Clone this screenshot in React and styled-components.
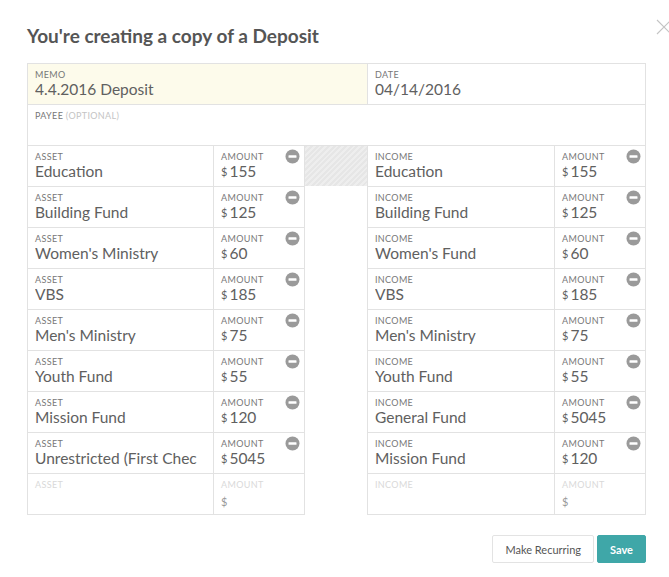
import React from "react";
import styled, { createGlobalStyle } from "styled-components";

const GlobalStyle = createGlobalStyle`
  html, body { margin: 0; padding: 0; background: #fff; }
  body { font-family: Lato, "Open Sans", "Liberation Sans", sans-serif; color: #555; }
  * { box-sizing: border-box; }
`;

const Page = styled.div`
  position: relative;
  width: 669px;
  height: 577px;
  overflow: hidden;
  padding: 25px 23px 0 27px;
`;

const CloseButton = styled.button`
  position: absolute;
  left: 656px;
  top: 19px;
  width: 16px;
  height: 16px;
  padding: 0;
  border: 0;
  background: transparent;
  cursor: pointer;
  display: block;
`;

const Title = styled.h1`
  margin: 0 0 16px;
  font-size: 19px;
  line-height: 22px;
  font-weight: 700;
  color: #555;
`;

const FormBox = styled.div`
  border: 1px solid #e2e2e2;
`;

const TopRow = styled.div`
  display: grid;
  grid-template-columns: 339px 1fr;
  border-bottom: 1px solid #e2e2e2;
`;

const Field = styled.div`
  height: 40px;
  padding: 6px 7px 0;
  background: ${(p) => (p.$highlight ? "#fdfbeb" : "#fff")};
  border-left: ${(p) => (p.$divider ? "1px solid #e2e2e2" : "0")};
  position: relative;
  min-width: 0;
`;

const Label = styled.div`
  font-size: 9px;
  line-height: 10px;
  letter-spacing: 0.35px;
  text-transform: uppercase;
  color: ${(p) => (p.$faint ? "#d9d9d9" : "#777")};
  white-space: nowrap;
`;

const Optional = styled.span`
  color: #c4c4c4;
`;

const Value = styled.div`
  font-size: 15.5px;
  line-height: 18px;
  font-weight: 400;
  color: #606060;
  white-space: nowrap;
  overflow: hidden;
`;

const Dollar = styled.span`
  font-size: 11px;
  margin-right: 2px;
  color: ${(p) => (p.$faint ? "#999" : "#606060")};
  vertical-align: ${(p) => (p.$faint ? "-1px" : "1px")};
`;

const Split = styled.div`
  display: grid;
  grid-template-columns: 278px 62px 279px;
  align-items: start;
`;

const Table = styled.div`
  border-left: 1px solid #e2e2e2;
  border-right: 1px solid #e2e2e2;
`;

const Row = styled.div`
  display: grid;
  grid-template-columns: ${(p) => p.$first}px 1fr;
  border-bottom: 1px solid #e2e2e2;
`;

const Hatch = styled.div`
  height: 40px;
  background: repeating-linear-gradient(
    135deg,
    #e6e6e6 0px,
    #e6e6e6 2px,
    #eeeeee 2px,
    #eeeeee 4px
  );
`;

const RemoveButton = styled.button`
  position: absolute;
  top: 3px;
  right: 4px;
  width: 15px;
  height: 15px;
  padding: 0;
  border: 0;
  background: transparent;
  cursor: pointer;
  display: block;
`;

const Actions = styled.div`
  display: flex;
  justify-content: flex-end;
  gap: 3px;
  margin-top: 20px;
`;

const Button = styled.button`
  height: 28px;
  padding: 0 12px;
  font-family: Lato, "Open Sans", "Liberation Sans", sans-serif;
  font-size: 11px;
  font-weight: ${(p) => (p.$primary ? 700 : 400)};
  color: ${(p) => (p.$primary ? "#fff" : "#555")};
  background: ${(p) => (p.$primary ? "#3fa7a8" : "#fff")};
  border: 1px solid ${(p) => (p.$primary ? "#3fa7a8" : "#e3e3e3")};
  border-radius: 2px;
  cursor: pointer;
`;

const assets = [
  ["Education", "155"],
  ["Building Fund", "125"],
  ["Women's Ministry", "60"],
  ["VBS", "185"],
  ["Men's Ministry", "75"],
  ["Youth Fund", "55"],
  ["Mission Fund", "120"],
  ["Unrestricted (First Chec", "5045"],
];

const incomes = [
  ["Education", "155"],
  ["Building Fund", "125"],
  ["Women's Fund", "60"],
  ["VBS", "185"],
  ["Men's Ministry", "75"],
  ["Youth Fund", "55"],
  ["General Fund", "5045"],
  ["Mission Fund", "120"],
];

function MinusIcon() {
  return (
    <svg width="15" height="15" viewBox="0 0 15 15">
      <circle cx="7.5" cy="7.5" r="7" fill="#9a9a9a" />
      <rect x="3.5" y="6.2" width="8" height="2.6" rx="0.6" fill="#fff" />
    </svg>
  );
}

function LineTable({ kind, first, items }) {
  return (
    <Table>
      {items.map(([name, amount], i) => (
        <Row key={i} $first={first}>
          <Field>
            <Label>{kind}</Label>
            <Value>{name}</Value>
          </Field>
          <Field $divider>
            <Label>Amount</Label>
            <Value>
              <Dollar>$</Dollar>
              {amount}
            </Value>
            <RemoveButton aria-label="Remove">
              <MinusIcon />
            </RemoveButton>
          </Field>
        </Row>
      ))}
      <Row $first={first}>
        <Field>
          <Label $faint>{kind}</Label>
        </Field>
        <Field $divider>
          <Label $faint>Amount</Label>
          <Value>
            <Dollar $faint>$</Dollar>
          </Value>
        </Field>
      </Row>
    </Table>
  );
}

export default function App() {
  return (
    <>
      <GlobalStyle />
      <Page>
        <CloseButton aria-label="Close">
          <svg width="16" height="16" viewBox="0 0 16 16">
            <path d="M1 1 L15 15 M15 1 L1 15" stroke="#c4c4c4" strokeWidth="1.1" fill="none" />
          </svg>
        </CloseButton>
        <Title>You're creating a copy of a Deposit</Title>
        <FormBox>
          <TopRow>
            <Field $highlight>
              <Label>Memo</Label>
              <Value>4.4.2016 Deposit</Value>
            </Field>
            <Field $divider>
              <Label>Date</Label>
              <Value>04/14/2016</Value>
            </Field>
          </TopRow>
          <Field>
            <Label>
              Payee <Optional>(Optional)</Optional>
            </Label>
          </Field>
        </FormBox>
        <Split>
          <LineTable kind="Asset" first={185} items={assets} />
          <Hatch />
          <LineTable kind="Income" first={186} items={incomes} />
        </Split>
        <Actions>
          <Button>Make Recurring</Button>
          <Button $primary>Save</Button>
        </Actions>
      </Page>
    </>
  );
}
